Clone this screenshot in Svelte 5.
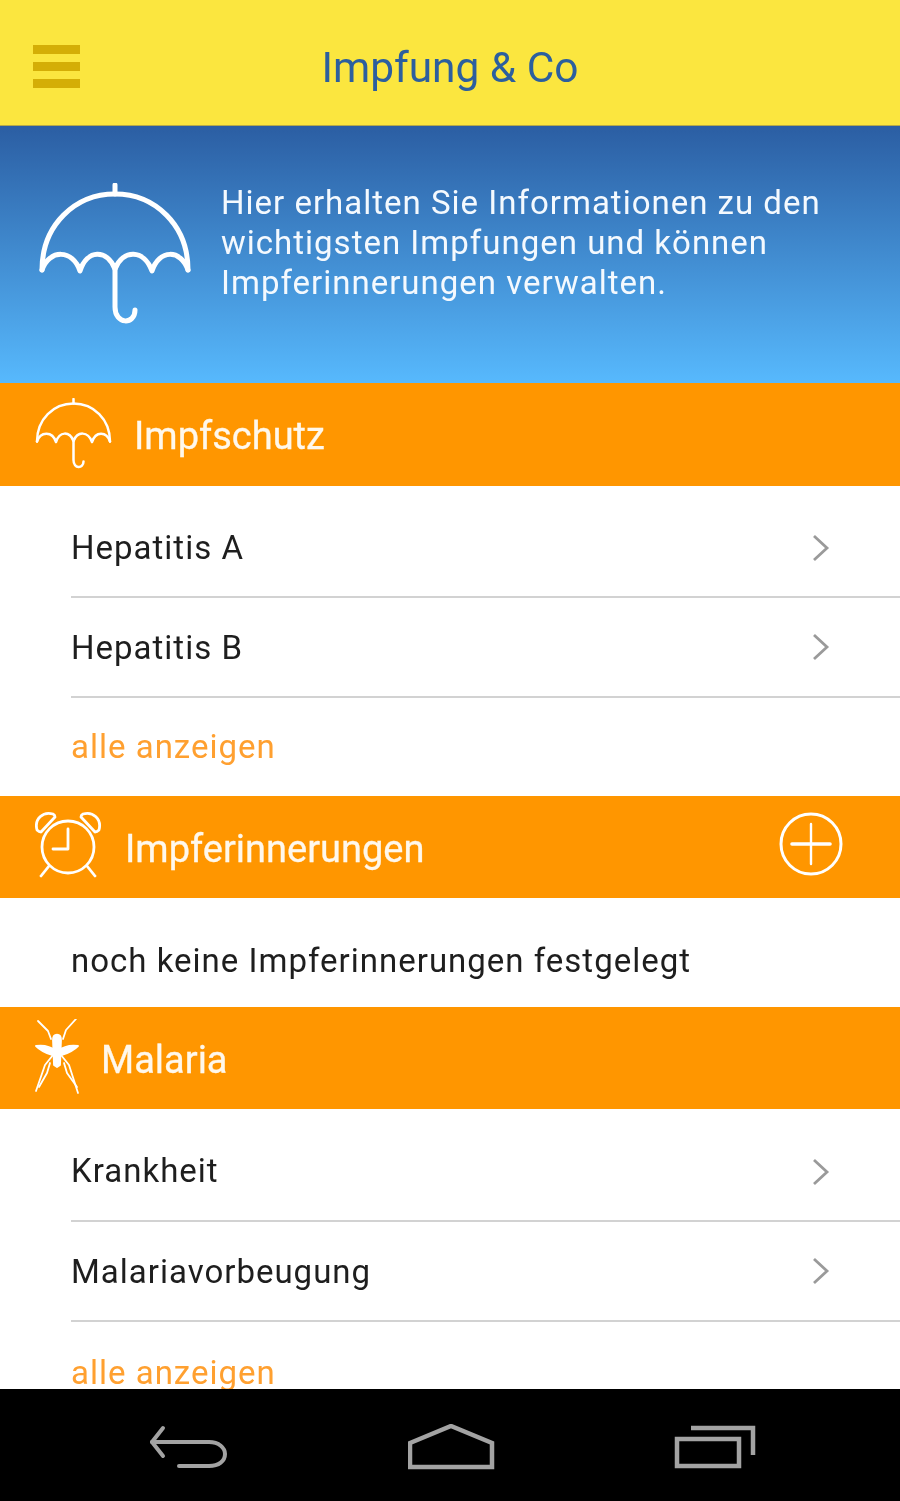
<script>
	const impfschutz = ['Hepatitis A', 'Hepatitis B'];
	const malaria = ['Krankheit', 'Malariavorbeugung'];
</script>

{#snippet chevron()}
	<svg class="chevron" width="18" height="28" viewBox="0 0 18 28">
		<path d="M2 2 L15 14 L2 26" fill="none" stroke="#9a9a9a" stroke-width="2.8" />
	</svg>
{/snippet}

{#snippet umbrella(cls)}
	<svg class={cls} viewBox="0 0 152 144" fill="none" stroke="#fff" stroke-linecap="round" stroke-linejoin="round">
		<path d="M76 2 V11" />
		<path d="M3 87 C3 42 36 11 76 11 C116 11 149 42 149 87" />
		<path d="M3 87 C10 66 34 66 41 88 C48 66 68 66 76 86 C84 66 105 66 113 88 C120 66 142 66 149 87" />
		<path d="M76 86 V124 C76 142 96 142 96 127" />
	</svg>
{/snippet}

<div class="screen">
	<header class="topbar">
		<div class="burger"><span></span><span></span><span></span></div>
		<h1>Impfung &amp; Co</h1>
	</header>

	<section class="hero">
		{@render umbrella('hero-icon')}
		<p>Hier erhalten Sie Informationen zu den wichtigsten Impfungen und können Impferinnerungen verwalten.</p>
	</section>

	<main class="content">
		<div class="band first">
			{@render umbrella('band-umbrella')}
			<span class="band-title">Impfschutz</span>
		</div>
		{#each impfschutz as item, i}
			<div class="row" class:tall={i === 0}>
				<span>{item}</span>
				{@render chevron()}
			</div>
		{/each}
		<div class="more">alle anzeigen</div>

		<div class="band">
			<svg class="alarm" viewBox="0 0 68 68" fill="none" stroke="#fff" stroke-width="2.8" stroke-linecap="round" stroke-linejoin="round">
				<circle cx="33" cy="36" r="26" />
				<path d="M33 18 V38 H18" />
				<path d="M2 19 C-1 8 8 0 18 3 C20 4 20 5 20 6 L6 21 C4 21 3 20 2 19 Z" />
				<path d="M64 19 C67 8 58 0 48 3 C46 4 46 5 46 6 L60 21 C62 21 63 20 64 19 Z" />
				<path d="M14 55 L6 65" />
				<path d="M52 55 L60 65" />
			</svg>
			<span class="band-title">Impferinnerungen</span>
			<svg class="plus" viewBox="0 0 64 64" fill="none" stroke="#fff" stroke-linecap="round">
				<circle cx="32" cy="32" r="30" stroke-width="3" />
				<path d="M32 12 V52" stroke-width="2.4" />
				<path d="M13 32 H51" stroke-width="3.6" />
			</svg>
		</div>
		<div class="row plain"><span>noch keine Impferinnerungen festgelegt</span></div>

		<div class="band">
			<svg class="mosquito" viewBox="0 0 46 76" fill="none" stroke="#fff" stroke-width="1.8" stroke-linecap="round" stroke-linejoin="round">
				<path d="M3 2 L13 12 L16 20" />
				<path d="M41 0 L31 11 L28 20" />
				<path d="M1 27 C8 26 16 28 21 32 L17 36 C11 34 5 31 1 27 Z" fill="#fff" />
				<path d="M43 27 C36 26 28 28 23 32 L27 36 C33 34 39 31 43 27 Z" fill="#fff" />
				<path d="M18 21 C18 14 26 14 26 21 L25 46 L22 48 L19 46 Z" fill="#fff" />
				<path d="M18 36 L10 46 L1 72" />
				<path d="M15 44 L12 54 L4 68" />
				<path d="M26 36 L34 46 L43 74" />
				<path d="M29 44 L32 54 L42 68" />
			</svg>
			<span class="band-title">Malaria</span>
		</div>
		{#each malaria as item, i}
			<div class="row" class:tall={i === 0} class:taller={i === 0}>
				<span>{item}</span>
				{@render chevron()}
			</div>
		{/each}
		<div class="more last">alle anzeigen</div>
	</main>

	<nav class="navbar">
		<svg width="80" height="44" viewBox="0 0 80 44" fill="none" stroke="#a3a3a3" stroke-width="4">
			<path d="M14 3 L3 17 L14 31" stroke-linecap="round" stroke-linejoin="round" />
			<path d="M3 17 H60 C70 17 76 23 76 29 C76 36 70 41 60 41 H30" stroke-linecap="round" />
		</svg>
		<svg width="88" height="46" viewBox="0 0 88 46" fill="none" stroke="#a3a3a3" stroke-width="4.5">
			<path d="M2 19 L43 2 L84 19 V43 H2 Z" stroke-linejoin="miter" />
		</svg>
		<svg width="82" height="44" viewBox="0 0 82 44" fill="none" stroke="#a3a3a3" stroke-width="4.5">
			<rect x="3" y="14" width="62" height="27" />
			<path d="M17 3 H79 V30" />
		</svg>
	</nav>
</div>

<style>
	:global(body) {
		margin: 0;
		background: #fff;
	}
	.screen {
		width: 900px;
		height: 1501px;
		display: flex;
		flex-direction: column;
		overflow: hidden;
		font-family: Roboto, "Liberation Sans", sans-serif;
		/* reference is a soft upscaled capture */
		filter: blur(0.6px);
	}
	.topbar {
		height: 125px;
		flex-shrink: 0;
		background: #fbe63f;
		display: flex;
		align-items: center;
		justify-content: center;
		position: relative;
		border-bottom: 1px solid #b5a94a;
		box-sizing: content-box;
	}
	.burger {
		position: absolute;
		left: 33px;
		top: 45px;
		width: 47px;
		display: flex;
		flex-direction: column;
		gap: 8px;
	}
	.burger span {
		height: 9px;
		background: #d4ae06;
	}
	h1 {
		margin: 0;
		font-size: 42.4px;
		font-weight: 400;
		color: #2c5f9e;
		padding-top: 10px;
	}
	.hero {
		height: 257px;
		flex-shrink: 0;
		box-sizing: border-box;
		background: linear-gradient(#2b5ea3, #57b9fd);
		display: flex;
		align-items: flex-start;
		padding: 57px 40px 0 39px;
		gap: 30px;
		color: #fff;
	}
	.hero-icon {
		width: 152px;
		height: 144px;
		flex-shrink: 0;
		stroke-width: 5;
	}
	.hero p {
		margin: 0;
		font-size: 33px;
		line-height: 40px;
		letter-spacing: 1px;
		color: #f4f9fe;
	}
	.content {
		flex: 1;
		min-height: 0;
		overflow: hidden;
		background: #fff;
	}
	.band {
		height: 102px;
		background: #ff9600;
		display: flex;
		align-items: center;
		color: #fff;
		position: relative;
		padding-left: 35px;
	}
	.band.first {
		height: 103px;
	}
	.band-title {
		font-size: 38px;
		font-weight: 400;
		color: #fff8ec;
		padding-top: 3px;
		-webkit-text-stroke: 0.3px #fff8ec;
	}
	.band-umbrella {
		width: 77px;
		height: 72px;
		stroke-width: 5;
		margin-right: 22px;
		margin-top: -2px;
	}
	.alarm {
		width: 68px;
		height: 68px;
		margin-right: 22px;
		margin-top: -4px;
	}
	.plus {
		position: absolute;
		right: 57px;
		top: 16px;
		width: 64px;
		height: 64px;
	}
	.mosquito {
		width: 46px;
		height: 76px;
		margin-right: 20px;
		margin-top: -2px;
	}
	.row {
		margin-left: 71px;
		height: 100px;
		box-sizing: border-box;
		border-bottom: 2px solid #d2d2d2;
		display: flex;
		align-items: center;
		justify-content: space-between;
		padding-right: 70px;
		font-size: 33px;
		letter-spacing: 1px;
		color: #1e1e1e;
	}
	.row.tall {
		height: 112px;
		padding-top: 12px;
	}
	.row.taller {
		height: 113px;
	}
	.row.plain {
		height: 109px;
		padding-top: 15px;
		border-bottom: 0;
	}
	.chevron {
		display: block;
	}
	.tall .chevron {
		margin-top: 2px;
	}
	.more {
		height: 98px;
		padding-left: 71px;
		padding-bottom: 2px;
		box-sizing: border-box;
		display: flex;
		align-items: center;
		font-size: 33px;
		letter-spacing: 1px;
		color: #ffa030;
	}
	.more.last {
		padding-bottom: 0;
		padding-top: 2px;
	}
	.navbar {
		height: 112px;
		flex-shrink: 0;
		background: #000;
		display: flex;
		align-items: center;
		justify-content: space-between;
		padding: 4px 144px 0 149px;
		box-sizing: border-box;
	}
</style>
